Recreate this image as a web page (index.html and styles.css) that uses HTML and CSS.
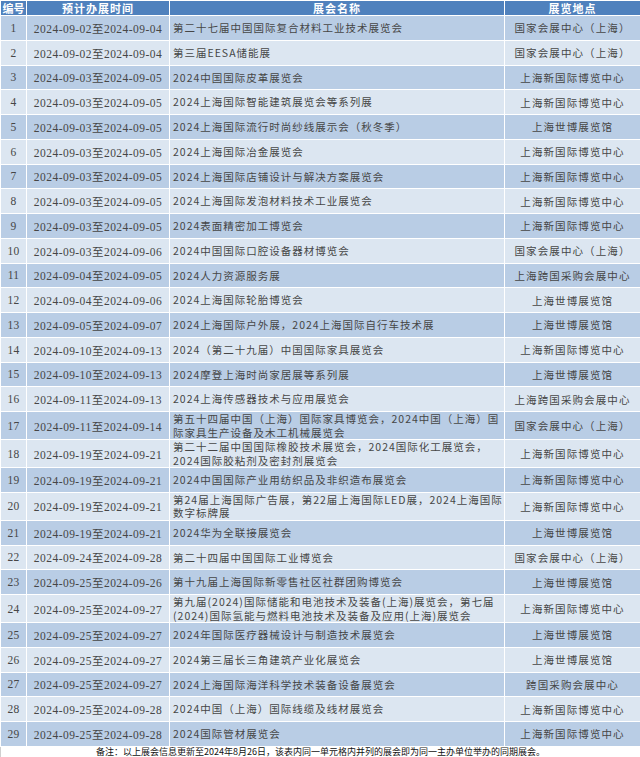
FILE: index.html
```html
<!DOCTYPE html>
<html lang="zh">
<head>
<meta charset="utf-8">
<link rel="stylesheet" href="styles.css">
</head>
<body>
<table class="expo">
<colgroup><col class="c-no"><col class="c-date"><col class="c-name"><col class="c-loc"></colgroup>
<thead>
<tr class="head"><th>编号</th><th>预计办展时间</th><th>展会名称</th><th>展览地点</th></tr>
</thead>
<tbody>
<tr><td class="no">1</td><td class="date">2024-09-02至2024-09-04</td><td class="name">第二十七届中国国际复合材料工业技术展览会</td><td class="loc">国家会展中心（上海）</td></tr>
<tr><td class="no">2</td><td class="date">2024-09-02至2024-09-04</td><td class="name">第三届EESA储能展</td><td class="loc">国家会展中心（上海）</td></tr>
<tr><td class="no">3</td><td class="date">2024-09-03至2024-09-05</td><td class="name">2024中国国际皮革展览会</td><td class="loc">上海新国际博览中心</td></tr>
<tr><td class="no">4</td><td class="date">2024-09-03至2024-09-05</td><td class="name">2024上海国际智能建筑展览会等系列展</td><td class="loc">上海新国际博览中心</td></tr>
<tr><td class="no">5</td><td class="date">2024-09-03至2024-09-05</td><td class="name">2024上海国际流行时尚纱线展示会（秋冬季）</td><td class="loc">上海世博展览馆</td></tr>
<tr><td class="no">6</td><td class="date">2024-09-03至2024-09-05</td><td class="name">2024上海国际冶金展览会</td><td class="loc">上海新国际博览中心</td></tr>
<tr><td class="no">7</td><td class="date">2024-09-03至2024-09-05</td><td class="name">2024上海国际店铺设计与解决方案展览会</td><td class="loc">上海新国际博览中心</td></tr>
<tr><td class="no">8</td><td class="date">2024-09-03至2024-09-05</td><td class="name">2024上海国际发泡材料技术工业展览会</td><td class="loc">上海新国际博览中心</td></tr>
<tr><td class="no">9</td><td class="date">2024-09-03至2024-09-05</td><td class="name">2024表面精密加工博览会</td><td class="loc">上海新国际博览中心</td></tr>
<tr><td class="no">10</td><td class="date">2024-09-03至2024-09-06</td><td class="name">2024中国国际口腔设备器材博览会</td><td class="loc">国家会展中心（上海）</td></tr>
<tr><td class="no">11</td><td class="date">2024-09-04至2024-09-05</td><td class="name">2024人力资源服务展</td><td class="loc">上海跨国采购会展中心</td></tr>
<tr><td class="no">12</td><td class="date">2024-09-04至2024-09-06</td><td class="name">2024上海国际轮胎博览会</td><td class="loc">上海世博展览馆</td></tr>
<tr><td class="no">13</td><td class="date">2024-09-05至2024-09-07</td><td class="name">2024上海国际户外展，2024上海国际自行车技术展</td><td class="loc">上海世博展览馆</td></tr>
<tr><td class="no">14</td><td class="date">2024-09-10至2024-09-13</td><td class="name">2024（第二十九届）中国国际家具展览会</td><td class="loc">上海新国际博览中心</td></tr>
<tr><td class="no">15</td><td class="date">2024-09-10至2024-09-13</td><td class="name">2024摩登上海时尚家居展等系列展</td><td class="loc">上海世博展览馆</td></tr>
<tr><td class="no">16</td><td class="date">2024-09-11至2024-09-13</td><td class="name">2024上海传感器技术与应用展览会</td><td class="loc">上海跨国采购会展中心</td></tr>
<tr class="tall"><td class="no">17</td><td class="date">2024-09-11至2024-09-14</td><td class="name">第五十四届中国（上海）国际家具博览会，2024中国（上海）国<br>际家具生产设备及木工机械展览会</td><td class="loc">国家会展中心（上海）</td></tr>
<tr class="tall"><td class="no">18</td><td class="date">2024-09-19至2024-09-21</td><td class="name">第二十二届中国国际橡胶技术展览会，2024国际化工展览会，<br>2024国际胶粘剂及密封剂展览会</td><td class="loc">上海新国际博览中心</td></tr>
<tr><td class="no">19</td><td class="date">2024-09-19至2024-09-21</td><td class="name">2024中国国际产业用纺织品及非织造布展览会</td><td class="loc">上海新国际博览中心</td></tr>
<tr class="tall"><td class="no">20</td><td class="date">2024-09-19至2024-09-21</td><td class="name">第24届上海国际广告展，第22届上海国际LED展，2024上海国际<br>数字标牌展</td><td class="loc">上海新国际博览中心</td></tr>
<tr><td class="no">21</td><td class="date">2024-09-19至2024-09-21</td><td class="name">2024华为全联接展览会</td><td class="loc">上海世博展览馆</td></tr>
<tr><td class="no">22</td><td class="date">2024-09-24至2024-09-28</td><td class="name">第二十四届中国国际工业博览会</td><td class="loc">国家会展中心（上海）</td></tr>
<tr><td class="no">23</td><td class="date">2024-09-25至2024-09-26</td><td class="name">第十九届上海国际新零售社区社群团购博览会</td><td class="loc">上海世博展览馆</td></tr>
<tr class="tall"><td class="no">24</td><td class="date">2024-09-25至2024-09-27</td><td class="name">第九届(2024)国际储能和电池技术及装备(上海)展览会，第七届<br>(2024)国际氢能与燃料电池技术及装备及应用(上海)展览会</td><td class="loc">上海新国际博览中心</td></tr>
<tr><td class="no">25</td><td class="date">2024-09-25至2024-09-27</td><td class="name">2024年国际医疗器械设计与制造技术展览会</td><td class="loc">上海世博展览馆</td></tr>
<tr><td class="no">26</td><td class="date">2024-09-25至2024-09-27</td><td class="name">2024第三届长三角建筑产业化展览会</td><td class="loc">上海世博展览馆</td></tr>
<tr><td class="no">27</td><td class="date">2024-09-25至2024-09-27</td><td class="name">2024上海国际海洋科学技术装备设备展览会</td><td class="loc">跨国采购会展中心</td></tr>
<tr><td class="no">28</td><td class="date">2024-09-25至2024-09-28</td><td class="name">2024中国（上海）国际线缆及线材展览会</td><td class="loc">上海新国际博览中心</td></tr>
<tr><td class="no">29</td><td class="date">2024-09-25至2024-09-28</td><td class="name">2024国际管材展览会</td><td class="loc">上海新国际博览中心</td></tr>
</tbody>
<tfoot>
<tr class="note"><td colspan="4">备注：以上展会信息更新至2024年8月26日，该表内同一单元格内并列的展会即为同一主办单位举办的同期展会。</td></tr>
</tfoot>
</table>
</body>
</html>
```

FILE: styles.css
```css
html, body {
  margin: 0;
  padding: 0;
  background: #ffffff;
}

.expo {
  width: 640px;
  border-collapse: collapse;
  table-layout: fixed;
  color: #464646;
  font-family: "Noto Sans CJK SC", sans-serif;
}

.c-no { width: 26px; }
.c-date { width: 143px; }
.c-name { width: 335px; }
.c-loc { width: 136px; }

.expo th,
.expo td {
  border: 1px solid #ffffff;
  padding: 0;
  white-space: nowrap;
  overflow: hidden;
}

.head {
  height: 15px;
}

.head th {
  background: #4f81bd;
  color: #ffffff;
  font-weight: bold;
  font-size: 11px;
  line-height: 13px;
  letter-spacing: 1px;
  text-align: center;
}

.head th:first-child {
  letter-spacing: 0;
}

tbody tr {
  height: 24.75px;
}

tbody tr.tall {
  height: 28px;
}

tbody tr:nth-child(odd) td {
  background: #b9cde5;
}

tbody tr:nth-child(even) td {
  background: #dce6f1;
}

.no {
  text-align: center;
  font-family: "Liberation Serif", "Noto Sans CJK SC", serif;
  font-size: 11.5px;
  letter-spacing: 0.3px;
}

.date {
  text-align: center;
  font-family: "Liberation Serif", "Noto Sans CJK SC", serif;
  font-size: 11.5px;
  letter-spacing: 0.45px;
}

.name {
  text-align: left;
  padding-left: 3px !important;
  font-size: 10.5px;
  line-height: 13.5px;
  letter-spacing: 1px;
}

.loc {
  text-align: center;
  font-size: 10.5px;
  letter-spacing: 1.1px;
}

.note {
  height: 12px;
}

.note td {
  border: 1px solid #d0d0d0;
  background: #ffffff;
  color: #111111;
  font-size: 9px;
  line-height: 10px;
  text-align: center;
}
```
